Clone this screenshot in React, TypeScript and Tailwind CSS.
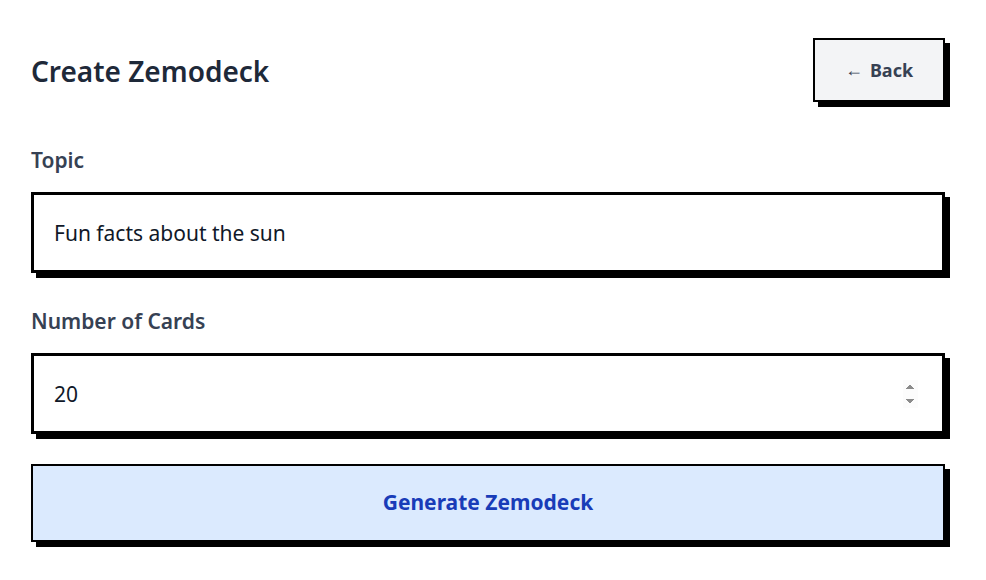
import React from 'react';

export default function App() {
  return (
    <div className="min-h-screen bg-white" style={{ fontFamily: '"Noto Sans", "Open Sans", sans-serif' }}>
      <div className="pl-[31px] pt-[38px] w-[945px]">
        {/* Header */}
        <div className="flex items-center justify-between">
          <h1 className="mt-[2px] text-[28px] leading-9 font-semibold text-gray-800">Create Zemodeck</h1>
          <button className="flex h-[64px] w-[132px] items-center justify-center gap-[7px] border-2 border-black bg-gray-100 text-lg font-bold text-gray-700 shadow-[5px_5px_0_0_#000]">
            <span className="text-lg font-normal" style={{ fontFamily: '"Liberation Sans", sans-serif' }}>←</span>
            <span>Back</span>
          </button>
        </div>

        {/* Topic */}
        <label className="mt-[44px] mb-[18px] block text-[21px] leading-7 font-semibold text-gray-700">Topic</label>
        <input
          type="text"
          defaultValue="Fun facts about the sun"
          className="block h-[81px] w-full border-[3px] border-black bg-white px-[20px] text-[21px] text-gray-900 shadow-[5px_5px_0_0_#000] outline-none"
        />

        {/* Number of cards */}
        <label className="mt-[34px] mb-[18px] block text-[21px] leading-7 font-semibold text-gray-700">Number of Cards</label>
        <input
          type="number"
          defaultValue={20}
          autoFocus
          className="block h-[81px] w-full border-[3px] border-black bg-white pl-[20px] pr-[24px] text-[21px] text-gray-900 shadow-[5px_5px_0_0_#000] outline-none"
        />

        <button className="mt-[30px] block h-[78px] w-full border-2 border-black bg-blue-100 text-[21px] font-bold text-blue-800 shadow-[5px_5px_0_0_#000]">
          Generate Zemodeck
        </button>
      </div>
    </div>
  );
}
